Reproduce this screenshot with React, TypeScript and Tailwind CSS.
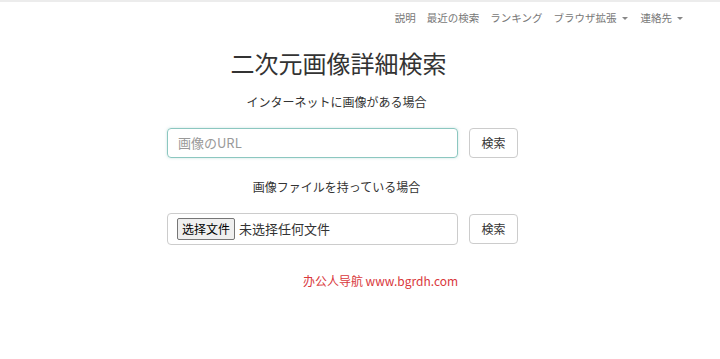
const jp = "font-['Noto_Sans_CJK_JP','Noto_Sans',sans-serif]";

const navItems = [
  { label: "説明" },
  { label: "最近の検索" },
  { label: "ランキング" },
  { label: "ブラウザ拡張", caret: true },
  { label: "連絡先", caret: true },
];

export default function App() {
  return (
    <div className={`min-h-[359px] w-[720px] bg-white ${jp}`}>
      {/* top bar */}
      <div className="h-[3px] border-t-2 border-[#ececec]" />
      <nav className="flex h-[30px] items-center justify-end gap-[11px] pr-[35px] text-[10.5px] text-[#777]">
        {navItems.map((item) => (
          <span key={item.label} className="flex items-center gap-[3px] leading-none">
            {item.label}
            {item.caret && (
              <span className="ml-[2px] mr-[2px] inline-block h-0 w-0 border-x-[3px] border-t-[3px] border-x-transparent border-t-[#888]" />
            )}
          </span>
        ))}
      </nav>

      <main className="ml-[167px] flex w-[351px] flex-col">
        <h1 className="mt-[14px] pr-[8px] text-center text-[24px] leading-[32px] text-[#333]">
          二次元画像詳細検索
        </h1>
        <p className="mt-[14px] pr-[12px] text-center text-[12px] leading-[18px] text-[#333]">
          インターネットに画像がある場合
        </p>

        <div className="mt-[17px] flex items-center gap-[11px]">
          <div className="flex h-[30px] w-[292px] items-center rounded-[4px] border border-[#8cc7c0] px-[10px] text-[13px] text-[#999] shadow-[0_0_3px_rgba(102,175,170,0.35)]">
            画像のURL
          </div>
          <button className="h-[30px] w-[49px] rounded-[4px] border border-[#ccc] bg-white text-[12px] text-[#333]">
            検索
          </button>
        </div>

        <p className="mt-[20px] pr-[12px] text-center text-[12px] leading-[18px] text-[#333]">
          画像ファイルを持っている場合
        </p>

        <div className="mt-[17px] flex items-center gap-[11px]">
          <div className="flex h-[32px] w-[292px] items-center rounded-[4px] border border-[#ccc] px-[9px] text-[13px] text-[#333]">
            <span className="flex h-[22px] items-center rounded-[2px] border border-[#767676] bg-[#efefef] px-[4px] text-[12px] text-black">
              选择文件
            </span>
            <span className="ml-[4px] font-['Noto_Sans_CJK_SC',sans-serif]">未选择任何文件</span>
          </div>
          <button className="h-[30px] w-[49px] rounded-[4px] border border-[#ccc] bg-white text-[12px] text-[#333]">
            検索
          </button>
        </div>

        <p className="mt-[27px] pl-[76px] text-center text-[12px] leading-[18px] text-[#d9383c] font-['Noto_Sans_CJK_SC','Noto_Sans',sans-serif]">
          办公人导航 www.bgrdh.com
        </p>
      </main>
    </div>
  );
}
